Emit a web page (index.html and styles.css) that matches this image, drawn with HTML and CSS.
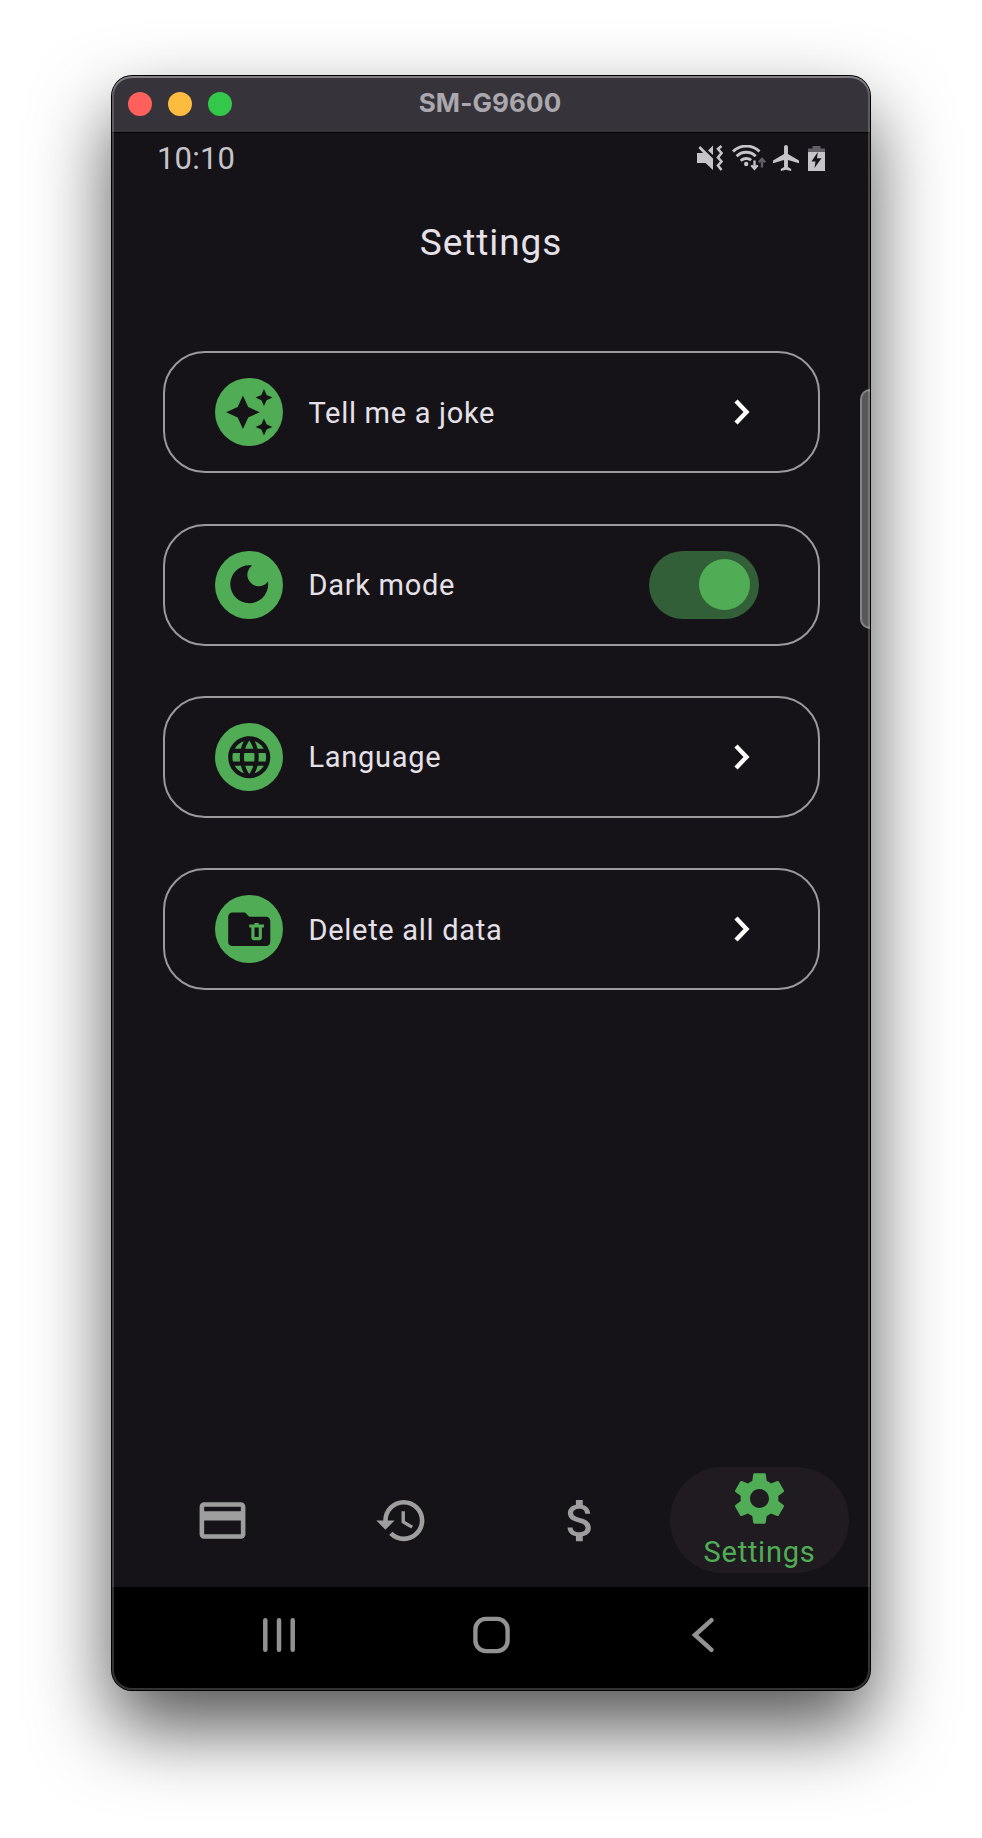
FILE: index.html
```html
<!DOCTYPE html>
<html lang="en">
<head>
<meta charset="utf-8">
<title>Settings</title>
<link rel="stylesheet" href="styles.css">
</head>
<body>
<div class="window">
  <header class="titlebar">
    <div class="lights"><span class="light red"></span><span class="light amber"></span><span class="light green"></span></div>
    <span class="window-name">SM-G9600</span>
  </header>
  <div class="statusbar">
    <span class="clock">10:10</span>
    <div class="status-icons">
      <svg class="st-mute" width="26" height="26" viewBox="0 0 26 26"><path fill="#c6c4c9" d="M0 8h6L1.500 3 3.200 1 16 13.500V25L8.500 18H0zM11 5.500L16 .500v9.500z"/><path fill="none" stroke="#c6c4c9" stroke-width="2.600" d="M24.500 1l-3.500 3 3.500 4-3.500 4.500 3.500 4-3.500 4 3.500 4.500"/></svg>
      <svg class="st-wifi" width="34" height="26" viewBox="0 0 34 26"><g fill="none" stroke="#c6c4c9" stroke-width="2.900"><path d="M1 6.500a19 19 0 0 1 26.500 0M4.700 11.200a13.500 13.500 0 0 1 19 0M8.700 15.700a8 8 0 0 1 10.500-.5"/><path stroke-width="2.300" d="M22.500 15.500v8M19.300 20.300l3.200 3.400 3.200-3.400"/></g><circle cx="14.200" cy="19" r="2.200" fill="#c6c4c9"/><path fill="none" stroke="#626066" stroke-width="2.300" d="M30 22.500v-8M26.800 17.300l3.200-3.400 3.200 3.400"/></svg>
      <svg class="st-plane" width="26" height="26" viewBox="2 2 20 20"><path fill="#c6c4c9" d="M22 16v-2l-8.500-5V3.500C13.500 2.670 12.830 2 12 2s-1.500.67-1.500 1.500V9L2 14v2l8.500-2.500V19L8 20.500V22l4-1 4 1v-1.500L13.500 19v-5.500L22 16z"/></svg>
      <svg class="st-battery" width="17" height="25" viewBox="0 0 17 25"><path fill="#626066" d="M0 2.500h4.500V0h8v2.500H17V6H0z"/><path fill="#c6c4c9" d="M0 6h17v19H0z"/><path fill="#151318" d="M9.800 6L3.500 15.500h4L6.500 22 13.500 12.300H9z"/></svg>
    </div>
  </div>
  <h1 class="page-title">Settings</h1>
  <main class="cards">
    <div class="card">
      <span class="disc"><svg width="50.500" height="50.500" viewBox="0 0 24 24"><path d="M19 9l1.250-2.750L23 5l-2.750-1.250L19 1l-1.250 2.750L15 5l2.750 1.250zM11.500 9.500L9 4 6.500 9.500 1 12l5.500 2.500L9 20l2.500-5.500L17 12zM19 15l-1.250 2.750L15 19l2.750 1.250L19 23l1.250-2.750L23 19l-2.750-1.250z"/></svg></span>
      <span class="label">Tell me a joke</span>
      <svg class="chevron" width="16" height="26" viewBox="0 0 16 26"><path d="M2 2l10.500 11L2 24"/></svg>
    </div>
    <div class="card">
      <span class="disc"><svg width="50.500" height="50.500" viewBox="0 0 24 24"><path d="M12 3a9 9 0 1 0 9 9c0-.46-.04-.92-.1-1.360a5.389 5.389 0 0 1-4.400 2.260 5.403 5.403 0 0 1-3.140-9.800c-.44-.06-.9-.1-1.360-.1z"/></svg></span>
      <span class="label">Dark mode</span>
      <span class="switch"><span class="thumb"></span></span>
    </div>
    <div class="card">
      <span class="disc"><svg width="50.500" height="50.500" viewBox="0 0 24 24"><path d="M11.990 2C6.470 2 2 6.480 2 12s4.470 10 9.990 10C17.520 22 22 17.520 22 12S17.520 2 11.990 2zm6.930 6h-2.950a15.650 15.650 0 0 0-1.380-3.560A8.030 8.030 0 0 1 18.920 8zM12 4.040c.83 1.200 1.480 2.530 1.910 3.960h-3.820c.43-1.430 1.080-2.760 1.910-3.960zM4.260 14C4.100 13.360 4 12.690 4 12s.1-1.360.26-2h3.380c-.08.66-.14 1.320-.14 2s.06 1.340.14 2H4.260zm.82 2h2.950c.32 1.250.78 2.450 1.380 3.560A7.987 7.987 0 0 1 5.080 16zm2.950-8H5.080a7.987 7.987 0 0 1 4.330-3.560A15.650 15.650 0 0 0 8.030 8zM12 19.960c-.83-1.200-1.480-2.530-1.910-3.960h3.820c-.43 1.430-1.080 2.760-1.910 3.960zM14.340 14H9.660c-.09-.66-.16-1.320-.16-2s.07-1.350.16-2h4.680c.09.65.16 1.320.16 2s-.07 1.340-.16 2zm.25 5.560c.6-1.110 1.060-2.310 1.380-3.560h2.950a8.030 8.030 0 0 1-4.330 3.560zM16.360 14c.08-.66.14-1.320.14-2s-.06-1.340-.14-2h3.380c.16.64.26 1.310.26 2s-.1 1.360-.26 2h-3.380z"/></svg></span>
      <span class="label">Language</span>
      <svg class="chevron" width="16" height="26" viewBox="0 0 16 26"><path d="M2 2l10.500 11L2 24"/></svg>
    </div>
    <div class="card">
      <span class="disc"><svg width="50.500" height="50.500" viewBox="0 0 24 24"><path fill-rule="evenodd" d="M20 6h-8l-2-2H4c-1.100 0-1.990.9-1.990 2L2 18c0 1.100.9 2 2 2h16c1.100 0 2-.9 2-2V8c0-1.100-.9-2-2-2zM14.500 9h2v.700H19v1.500h-1V16c0 .7-.5 1.200-1.200 1.200h-2.600c-.7 0-1.200-.5-1.200-1.200v-4.800h-1V9.700h2.500zM14.500 11.200v4.500h2v-4.500z"/></svg></span>
      <span class="label">Delete all data</span>
      <svg class="chevron" width="16" height="26" viewBox="0 0 16 26"><path d="M2 2l10.500 11L2 24"/></svg>
    </div>
  </main>
  <nav class="tabs">
    <span class="tab"><svg width="55" height="55" viewBox="0 0 24 24"><path d="M20 4H4c-1.110 0-1.990.89-1.990 2L2 18c0 1.110.89 2 2 2h16c1.110 0 2-.89 2-2V6c0-1.110-.89-2-2-2zm0 14H4v-6h16v6zm0-10H4V6h16v2z"/></svg></span>
    <span class="tab"><svg width="55" height="55" viewBox="0 0 24 24"><path d="M13 3a9 9 0 0 0-9 9H1l3.890 3.890.07.14L9 12H6c0-3.870 3.130-7 7-7s7 3.130 7 7-3.130 7-7 7c-1.930 0-3.680-.79-4.940-2.060l-1.420 1.420A8.954 8.954 0 0 0 13 21a9 9 0 0 0 0-18zm-1 5v5l4.280 2.540.72-1.210-3.500-2.080V8H12z"/></svg></span>
    <span class="tab"><svg width="55" height="55" viewBox="0 0 24 24"><path d="M11.800 10.900c-2.270-.59-3-1.200-3-2.150 0-1.090 1.010-1.850 2.700-1.850 1.780 0 2.440.85 2.500 2.100h2.210c-.07-1.720-1.120-3.300-3.210-3.810V3h-3v2.160c-1.940.42-3.500 1.680-3.500 3.610 0 2.310 1.910 3.460 4.700 4.130 2.500.6 3 1.480 3 2.410 0 .69-.49 1.790-2.700 1.790-2.060 0-2.870-.92-2.980-2.100h-2.200c.12 2.190 1.760 3.420 3.680 3.830V21h3v-2.150c1.950-.37 3.500-1.500 3.500-3.550 0-2.840-2.430-3.810-4.700-4.400z"/></svg></span>
    <span class="tab active"><svg width="63" height="63" viewBox="0 0 24 24"><path d="M19.140 12.940c.04-.3.060-.61.060-.94 0-.32-.02-.64-.07-.94l2.030-1.580c.18-.14.23-.41.12-.61l-1.920-3.320c-.12-.22-.37-.29-.59-.22l-2.390.96c-.5-.38-1.030-.7-1.620-.94L14.400 2.810c-.04-.24-.24-.41-.48-.41h-3.840c-.24 0-.43.17-.47.41l-.36 2.540c-.59.24-1.130.57-1.620.94l-2.390-.96c-.22-.08-.47 0-.59.22L2.740 8.870c-.12.21-.08.47.12.61l2.030 1.580c-.05.3-.09.63-.09.94s.02.64.07.94l-2.030 1.580c-.18.14-.23.41-.12.61l1.920 3.320c.12.22.37.29.59.22l2.390-.96c.5.38 1.030.7 1.620.94l.36 2.540c.05.24.24.41.48.41h3.840c.24 0 .44-.17.47-.41l.36-2.540c.59-.24 1.130-.56 1.620-.94l2.390.96c.22.08.47 0 .59-.22l1.920-3.320c.12-.22.07-.47-.12-.61l-2.010-1.580zM12 15.600c-1.980 0-3.600-1.620-3.600-3.600s1.620-3.600 3.600-3.600 3.600 1.620 3.600 3.600-1.620 3.600-3.600 3.600z"/></svg><span class="tab-label">Settings</span></span>
  </nav>
  <footer class="sysnav">
    <svg width="38" height="38" viewBox="0 0 38 38"><path stroke-width="4.500" d="M5.300 4.200v29.600M19 4.200v29.600M32.700 4.200v29.600"/></svg>
    <svg width="38" height="38" viewBox="0 0 38 38"><rect x="2.400" y="2.900" width="32.200" height="32.200" rx="10.500" stroke-width="4.400"/></svg>
    <svg width="38" height="38" viewBox="0 0 38 38"><path stroke-width="4.500" d="M26.500 4.200L10 19l16.500 14.800"/></svg>
  </footer>
  <div class="edge-handle"></div>
</div>
</body>
</html>
```
FILE: styles.css
```css
* { box-sizing: border-box; }
body { margin: 0; min-height: 1838px; background: #fff; padding: 76px 0 0 112px; overflow: hidden; font-family: Roboto, sans-serif; }
.window { position: relative; width: 758px; height: 1614px; border-radius: 20px; background: #151318; box-shadow: 0 0 0 1px #000, 0 37px 78px rgba(0,0,0,.68); display: flex; flex-direction: column; }
.window::after { content: ""; position: absolute; inset: 0; border-radius: 20px; pointer-events: none; box-shadow: inset 0 0 0 2px rgba(255,255,255,.2), inset 0 2px 0 rgba(255,255,255,.22); }
.titlebar { height: 57px; flex: none; display: grid; grid-template-columns: 1fr auto 1fr; align-items: center; background: #36343a; border-bottom: 1px solid #000; border-radius: 20px 20px 0 0; padding-left: 15px; padding-right: 17px; }
.lights { display: flex; gap: 16px; padding-left: 1px; }
.light { width: 24px; height: 24px; border-radius: 50%; }
.red { background: #ff605c; }
.amber { background: #fdbc40; }
.green { background: #34c84a; }
.window-name { font: 700 26px/28px Inter, sans-serif; letter-spacing: .1px; color: #aaa8ae; padding-bottom: 2px; }
.statusbar { height: 50px; flex: none; display: flex; justify-content: space-between; align-items: center; padding: 0 45px; }
.clock { font-size: 31px; letter-spacing: .2px; color: #c6c4c9; }
.status-icons { display: flex; align-items: center; }
.st-wifi { margin-left: 9px; }
.st-plane { margin-left: 7px; }
.st-battery { margin-left: 9px; }
.page-title { margin: 36px 0 0; height: 48px; flex: none; font-weight: 400; font-size: 37px; line-height: 48px; text-align: center; color: #e6e0e9; letter-spacing: .9px; }
.cards { margin: 84.300px 50.500px 0; display: flex; flex-direction: column; gap: 50.300px; }
.card { height: 122px; flex: none; border: 2px solid #9b999c; border-radius: 42px; display: flex; align-items: center; padding: 0 67.500px 0 50.500px; }
.disc { width: 68px; height: 68px; flex: none; border-radius: 50%; background: #50ad55; display: flex; align-items: center; justify-content: center; }
.disc svg { fill: #151318; }
.label { margin-left: 25.500px; padding-top: 1px; flex: 1; font-size: 29px; letter-spacing: .7px; color: #e6e0e9; white-space: nowrap; }
.chevron { fill: none; stroke: #fff; stroke-width: 4.400px; }
.switch { width: 110px; height: 68px; border-radius: 34px; background: #325f37; display: flex; align-items: center; justify-content: flex-end; padding-right: 8.500px; margin-right: -8.500px; }
.thumb { width: 51px; height: 51px; border-radius: 50%; background: #50ad55; }
.tabs { margin-top: auto; height: 120px; flex: none; display: grid; grid-template-columns: repeat(4, 179px); justify-content: center; align-items: start; }
.tab { height: 106px; display: flex; flex-direction: column; align-items: center; justify-content: center; }
.tab svg { fill: #9e9e9e; }
.tab.active { border-radius: 53px; background: #201b20; justify-content: flex-start; }
.tab.active svg { fill: #50ad55; }
.tab-label { font-size: 29px; line-height: 36px; margin-top: 4px; letter-spacing: .75px; color: #50ad55; }
.sysnav { height: 103px; flex: none; display: flex; justify-content: space-between; padding: 29px 147px 0 148px; background: #000; border-radius: 0 0 20px 20px; }
.sysnav svg { fill: none; stroke: #929292; stroke-linecap: round; }
.edge-handle { position: absolute; right: 0; top: 313px; width: 10.500px; height: 240px; border: 2px solid #858487; border-right: 0; border-radius: 10px 0 0 10px; background: #58575c; }
```
